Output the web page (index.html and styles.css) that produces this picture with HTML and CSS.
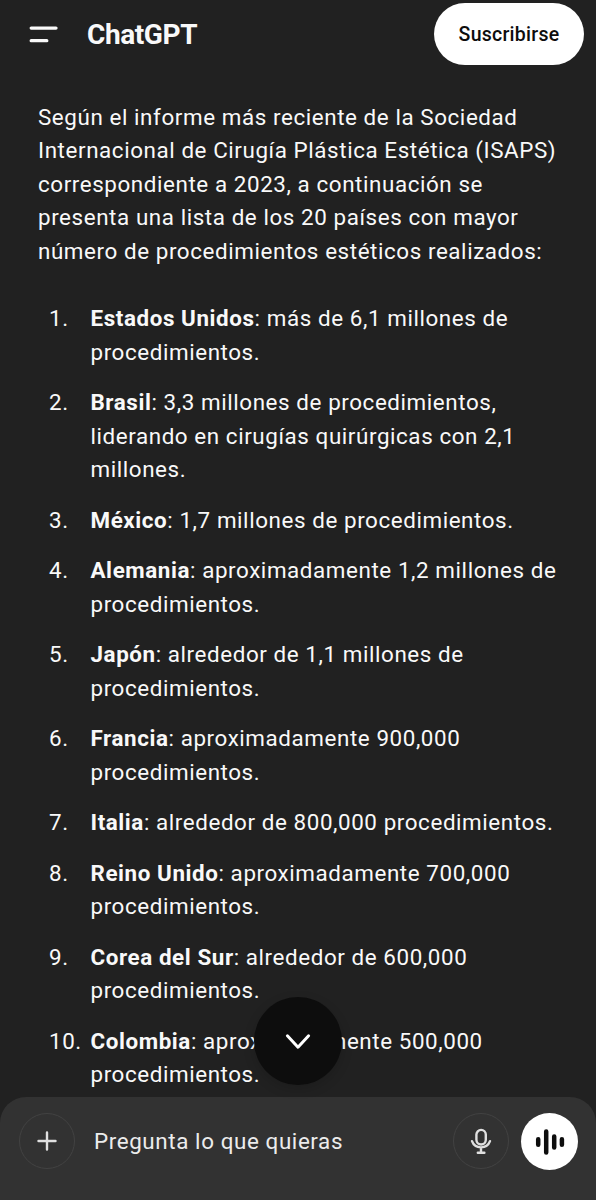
FILE: index.html
```html
<!DOCTYPE html>
<html lang="es">
<head>
<meta charset="utf-8">
<title>ChatGPT</title>
<link rel="stylesheet" href="styles.css">
</head>
<body>
<div class="app">
  <header class="topbar">
    <svg class="menu" width="30" height="20" viewBox="0 0 30 20"><path d="M3.2 4.1H28M3.2 16.7H18.8"/></svg>
    <h1 class="brand">ChatGPT</h1>
    <button class="subscribe">Suscribirse</button>
  </header>
  <main class="message">
    <p class="intro">Según el informe más reciente de la Sociedad<br>Internacional de Cirugía Plástica Estética (ISAPS)<br>correspondiente a 2023, a continuación se<br>presenta una lista de los 20 países con mayor<br>número de procedimientos estéticos realizados:</p>
    <ol class="list">
      <li><span class="num">1.</span><p><b>Estados Unidos</b>: más de 6,1 millones de<br>procedimientos.</p></li>
      <li><span class="num">2.</span><p><b>Brasil</b>: 3,3 millones de procedimientos,<br>liderando en cirugías quirúrgicas con 2,1<br>millones.</p></li>
      <li><span class="num">3.</span><p><b>México</b>: 1,7 millones de procedimientos.</p></li>
      <li><span class="num">4.</span><p><b>Alemania</b>: aproximadamente 1,2 millones de<br>procedimientos.</p></li>
      <li><span class="num">5.</span><p><b>Japón</b>: alrededor de 1,1 millones de<br>procedimientos.</p></li>
      <li><span class="num">6.</span><p><b>Francia</b>: aproximadamente 900,000<br>procedimientos.</p></li>
      <li><span class="num">7.</span><p><b>Italia</b>: alrededor de 800,000 procedimientos.</p></li>
      <li><span class="num">8.</span><p><b>Reino Unido</b>: aproximadamente 700,000<br>procedimientos.</p></li>
      <li><span class="num">9.</span><p><b>Corea del Sur</b>: alrededor de 600,000<br>procedimientos.</p></li>
      <li><span class="num">10.</span><p><b>Colombia</b>: aproximadamente 500,000<br>procedimientos.</p></li>
    </ol>
  </main>
  <button class="scroll-down" aria-label="Bajar"><svg width="28" height="18" viewBox="0 0 28 18"><path d="M3.4 3.8L14 15.2L24.6 3.8"/></svg></button>
  <footer class="composer">
    <button class="round"><svg width="24" height="24" viewBox="0 0 24 24"><path d="M12 3.5V20.5M3.5 12H20.5"/></svg></button>
    <span class="placeholder">Pregunta lo que quieras</span>
    <button class="round"><svg width="24" height="28" viewBox="0 0 24 28"><rect x="7.4" y="2.9" width="9.4" height="14.6" rx="4.7"/><path d="M3 14.2C6 22.4 18 22.4 21 14.2M12 20.5V25.5M8.8 25.7H15.4"/></svg></button>
    <button class="voice"><svg width="32" height="28" viewBox="0 0 32 28"><path d="M4.2 11.2V16.8M12.2 3.5V24.5M20.2 8.5V19.5M27.9 11.2V16.8"/></svg></button>
  </footer>
</div>
</body>
</html>
```
FILE: styles.css
```css
* { box-sizing: border-box; }
body { margin: 0; background: #212121; color: #f9f9f9; font-family: Roboto, sans-serif; }
button { border: 0; padding: 0; font: inherit; display: flex; align-items: center; justify-content: center; flex: none; }
svg { fill: none; stroke: currentColor; stroke-linecap: round; stroke-linejoin: round; display: block; }
.app { position: relative; width: 596px; height: 1200px; overflow: hidden; display: flex; flex-direction: column; }
.topbar { height: 68px; padding: 0 12px 0 28px; display: flex; align-items: center; flex: none; }
.menu { stroke-width: 3.3; }
.brand { margin: 0 auto 0 29px; font-size: 28px; font-weight: 700; letter-spacing: -0.4px; }
.subscribe { width: 150px; height: 62px; border-radius: 31px; background: #fff; color: #0d0d0d; font-size: 19.5px; font-weight: 500; letter-spacing: 0.25px; }
.message { flex: 1; min-height: 0; padding: 32.7px 0 0 38px; font-size: 22.4px; line-height: 33.6px; white-space: nowrap; letter-spacing: 0.58px; }
.message p { margin: 0; }
.list { list-style: none; margin: 33.6px 0 0; padding: 0; display: flex; flex-direction: column; gap: 16.8px; }
.list li { display: flex; }
.num { width: 52.5px; padding-left: 11px; flex: none; }
.list b { font-weight: 700; }
.scroll-down { position: absolute; left: 254px; top: 997px; width: 88px; height: 88px; border-radius: 50%; background: #0d0d0d; color: #fff; box-shadow: 0 4px 12px rgba(0, 0, 0, 0.15); }
.scroll-down svg { stroke-width: 3; }
.composer { height: 103px; flex: none; background: #323232; border-radius: 26px 26px 0 0; padding: 16px 18px 0 19px; display: flex; align-items: flex-start; }
.round { width: 56px; height: 56px; border-radius: 50%; border: 1.5px solid #424242; background: transparent; color: #e0e0e0; }
.round svg { stroke-width: 2.4; }
.placeholder { margin: 0 auto 0 19px; line-height: 57px; font-size: 22.4px; letter-spacing: 0.6px; color: #ececec; }
.voice { width: 57px; height: 57px; border-radius: 50%; margin-left: 12px; background: #fff; color: #0d0d0d; }
.voice svg { stroke-width: 4.5; }
```
